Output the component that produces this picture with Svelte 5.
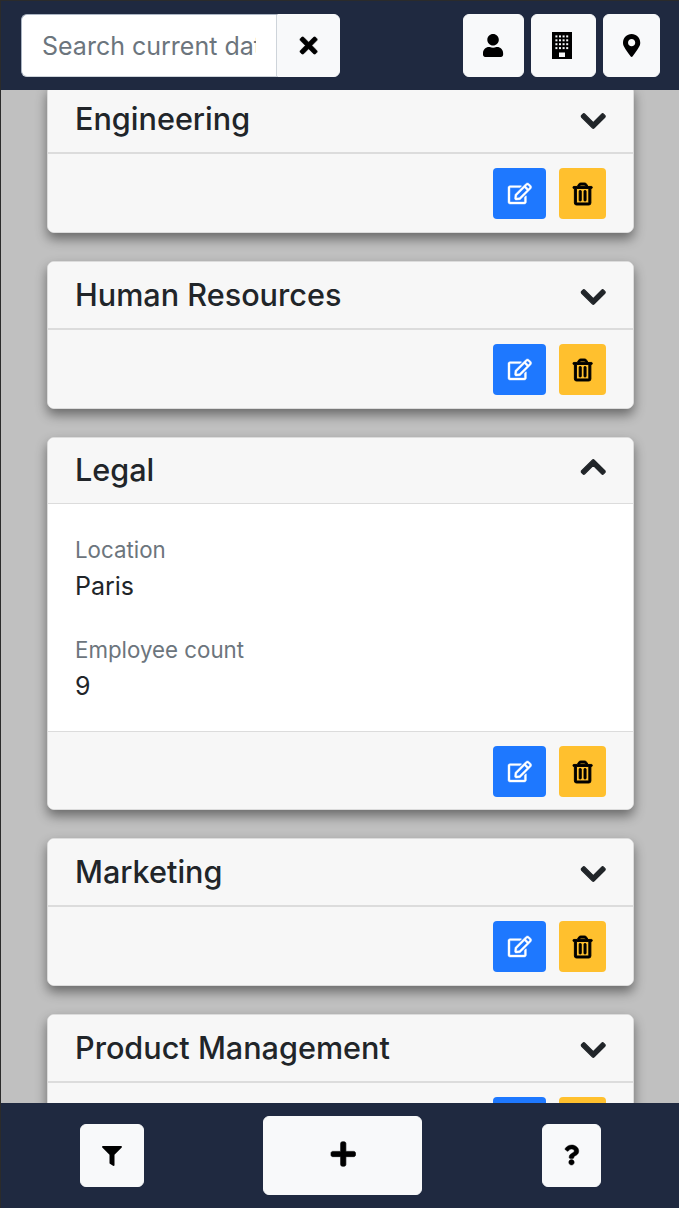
<script>
  const icons = {
    times: ['0 0 352 512', 'M242.72 256l100.07-100.07c12.28-12.28 12.28-32.19 0-44.48l-22.24-22.24c-12.28-12.28-32.19-12.28-44.48 0L176 189.28 75.93 89.21c-12.28-12.28-32.19-12.28-44.48 0L9.21 111.45c-12.28 12.28-12.28 32.19 0 44.48L109.28 256 9.21 356.07c-12.28 12.28-12.28 32.19 0 44.48l22.24 22.24c12.28 12.28 32.2 12.28 44.48 0L176 322.72l100.07 100.07c12.28 12.28 32.2 12.28 44.48 0l22.24-22.24c12.28-12.28 12.28-32.19 0-44.48L242.72 256z'],
    user: ['0 0 448 512', 'M224 256c70.7 0 128-57.3 128-128S294.7 0 224 0 96 57.3 96 128s57.3 128 128 128zm89.6 32h-16.7c-22.2 10.2-46.9 16-72.9 16s-50.6-5.8-72.9-16h-16.7C60.2 288 0 348.2 0 422.4V464c0 26.5 21.5 48 48 48h352c26.5 0 48-21.5 48-48v-41.6c0-74.2-60.2-134.4-134.4-134.4z'],
    marker: ['0 0 384 512', 'M172.268 501.67C26.97 291.031 0 262.429 0 192 0 85.961 85.961 0 192 0s192 85.961 192 192c0 70.429-26.97 99.031-172.268 309.67-9.535 13.774-29.93 13.773-39.464 0zM192 272c44.183 0 80-35.817 80-80s-35.817-80-80-80-80 35.817-80 80 35.817 80 80 80z'],
    down: ['0 0 448 512', 'M207.029 381.476L12.686 187.132c-9.373-9.373-9.373-24.569 0-33.941l22.667-22.667c9.357-9.357 24.522-9.375 33.901-.04L224 284.505l154.745-154.021c9.379-9.335 24.544-9.317 33.901.04l22.667 22.667c9.373 9.373 9.373 24.569 0 33.941L240.971 381.476c-9.373 9.372-24.569 9.372-33.942 0z'],
    up: ['0 0 448 512', 'M240.971 130.524l194.343 194.343c9.373 9.373 9.373 24.569 0 33.941l-22.667 22.667c-9.357 9.357-24.522 9.375-33.901.04L224 227.495 69.255 381.516c-9.379 9.335-24.544 9.317-33.901-.04l-22.667-22.667c-9.373-9.373-9.373-24.569 0-33.941L207.03 130.525c9.372-9.373 24.568-9.373 33.941-.001z'],
    edit: ['0 0 576 512', 'M402.3 344.9l32-32c5-5 13.7-1.5 13.7 5.7V464c0 26.5-21.5 48-48 48H48c-26.5 0-48-21.5-48-48V112c0-26.5 21.5-48 48-48h273.5c7.1 0 10.7 8.6 5.7 13.7l-32 32c-1.5 1.5-3.5 2.3-5.7 2.3H48v352h352V350.5c0-2.1.8-4.1 2.3-5.6zm156.6-201.8L296.3 405.7l-90.4 10c-26.2 2.9-48.5-19.2-45.6-45.6l10-90.4L432.9 17.1c22.9-22.9 59.9-22.9 82.7 0l43.2 43.2c22.9 22.9 22.9 60 .1 82.8zM460.1 174L402 115.9 216.2 301.8l-7.3 65.3 65.3-7.3L460.1 174zm64.8-79.7l-43.2-43.2c-4.1-4.1-10.8-4.1-14.8 0L436 82l58.1 58.1 30.9-30.9c4-4.2 4-10.8-.1-14.9z'],
    trash: ['0 0 448 512', 'M268 416h24a12 12 0 0 0 12-12V188a12 12 0 0 0-12-12h-24a12 12 0 0 0-12 12v216a12 12 0 0 0 12 12zM432 80h-82.41l-34-56.7A48 48 0 0 0 274.41 0H173.59a48 48 0 0 0-41.16 23.3L98.41 80H16A16 16 0 0 0 0 96v16a16 16 0 0 0 16 16h16v336a48 48 0 0 0 48 48h288a48 48 0 0 0 48-48V128h16a16 16 0 0 0 16-16V96a16 16 0 0 0-16-16zM171.84 50.91A6 6 0 0 1 177 48h94a6 6 0 0 1 5.15 2.91L293.61 80H154.39zM368 464H80V128h288zm-212-48h24a12 12 0 0 0 12-12V188a12 12 0 0 0-12-12h-24a12 12 0 0 0-12 12v216a12 12 0 0 0 12 12z'],
    filter: ['0 0 512 512', 'M487.976 0H24.028C2.71 0-8.047 25.866 7.058 40.971L192 225.941V432c0 7.831 3.821 15.172 10.237 19.662l80 55.98C298.02 518.69 320 507.493 320 487.98V225.941l184.947-184.97C520.021 25.896 509.338 0 487.976 0z'],
    plus: ['0 0 448 512', 'M416 208H272V64c0-17.67-14.33-32-32-32h-32c-17.67 0-32 14.33-32 32v144H32c-17.67 0-32 14.33-32 32v32c0 17.67 14.33 32 32 32h144v144c0 17.67 14.33 32 32 32h32c17.67 0 32-14.33 32-32V304h144c17.67 0 32-14.33 32-32v-32c0-17.67-14.33-32-32-32z'],
    question: ['0 0 384 512', 'M202.021 0C122.202 0 70.503 32.703 29.914 91.026c-7.363 10.58-5.093 25.086 5.178 32.874l43.138 32.709c10.373 7.865 25.132 6.026 33.253-4.148 25.049-31.381 43.63-49.449 82.757-49.449 30.764 0 68.816 19.799 68.816 49.631 0 22.552-18.617 34.134-48.993 51.164-35.423 19.86-82.299 44.576-82.299 106.405V320c0 13.255 10.745 24 24 24h72.471c13.255 0 24-10.745 24-24v-5.773c0-42.86 125.268-44.645 125.268-160.627C377.504 66.256 286.902 0 202.021 0zM192 373.459c-38.196 0-69.271 31.075-69.271 69.271 0 38.195 31.075 69.27 69.271 69.27s69.271-31.075 69.271-69.271-31.075-69.27-69.271-69.27z']
  };

  const departments = [
    { name: 'Engineering' },
    { name: 'Human Resources' },
    { name: 'Legal', open: true, location: 'Paris', count: 9 },
    { name: 'Marketing' },
    { name: 'Product Management' }
  ];
</script>

{#snippet icon(name, h, bold = 0)}
  <svg viewBox={icons[name][0]} height={h} fill="currentColor" stroke="currentColor" stroke-width={bold} aria-hidden="true"><path d={icons[name][1]} /></svg>
{/snippet}

<div class="app">
  <header class="top">
    <div class="search">
      <input type="text" placeholder="Search current data" />
      <button class="btn clear" type="button">{@render icon('times', 25, 14)}</button>
    </div>
    <div class="tabs">
      <button class="btn tab-user" type="button">{@render icon('user', 23)}</button>
      <button class="btn tab-dept" type="button">
        <svg viewBox="0 0 20 27" width="20" height="27" aria-hidden="true">
          <rect width="20" height="27" fill="#000" />
          {#each [0, 1, 2, 3] as row}
            {#each [0, 1, 2, 3] as col}
              <rect x={3.4 + col * 3.6} y={3.4 + row * 3.9} width="2" height="2" fill="#f8f9fa" />
            {/each}
          {/each}
          <rect x="7" y="20.5" width="6" height="4.5" fill="#f8f9fa" />
        </svg>
      </button>
      <button class="btn tab-loc" type="button">{@render icon('marker', 23)}</button>
    </div>
  </header>

  <main class="scroller">
    <div class="list">
      {#each departments as dept}
        <section class="card">
          <div class="card-head" class:open={dept.open}>
            <h2>{dept.name}</h2>
            <span class="chev">{@render icon(dept.open ? 'up' : 'down', 28, 22)}</span>
          </div>
          {#if dept.open}
            <div class="card-body">
              <div class="field">
                <div class="label">Location</div>
                <div class="value">{dept.location}</div>
              </div>
              <div class="field">
                <div class="label">Employee count</div>
                <div class="value">{dept.count}</div>
              </div>
            </div>
          {/if}
          <div class="card-foot">
            <button class="act edit" type="button">{@render icon('edit', 21, 10)}</button>
            <button class="act del" type="button">{@render icon('trash', 22, 22)}</button>
          </div>
        </section>
      {/each}
    </div>
  </main>

  <footer class="bottom">
    <button class="btn foot-filter" type="button">{@render icon('filter', 20)}</button>
    <button class="btn foot-add" type="button">{@render icon('plus', 28, 12)}</button>
    <button class="btn foot-help" type="button">{@render icon('question', 20, 12)}</button>
  </footer>
</div>

<style>
  :global(body) {
    background: #c0c0c0;
  }
  .app {
    height: 1208px;
    display: flex;
    flex-direction: column;
    overflow: hidden;
    font-family: Inter, "Liberation Sans", sans-serif;
    color: #212529;
    background: #c0c0c0;
    border-left: 1px solid #2b2b2b;
    box-sizing: border-box;
  }
  .btn {
    display: flex;
    align-items: center;
    justify-content: center;
    padding: 0;
    border: 1px solid #f8f9fa;
    border-radius: 6px;
    background: #f8f9fa;
    color: #000;
  }
  svg {
    overflow: visible;
  }
  .top {
    height: 90px;
    flex: none;
    display: flex;
    justify-content: space-between;
    align-items: flex-start;
    box-sizing: border-box;
    padding: 13px 19px 0 20px;
    background: #1f2940;
    border-top: 1px solid #2b2b2b;
    position: relative;
    z-index: 2;
  }
  .search {
    display: flex;
    height: 63px;
  }
  input {
    width: 256px;
    box-sizing: border-box;
    padding: 0 20px;
    font: 400 25px Inter, "Liberation Sans", sans-serif;
    border: 1px solid #ced4da;
    border-top-color: #aab4c2;
    border-left-color: #aab4c2;
    border-radius: 6px 0 0 6px;
    background: #fff;
    outline: none;
  }
  input::placeholder {
    color: #6c757d;
  }
  .clear {
    width: 63px;
    border-radius: 0 6px 6px 0;
  }
  .tabs {
    display: flex;
    gap: 7px;
  }
  .tabs .btn {
    height: 63px;
  }
  .tab-user { width: 61px; }
  .tab-dept { width: 65px; padding-right: 3px; }
  .tab-loc { width: 57px; }
  .scroller {
    flex: 1;
    min-height: 0;
    overflow: hidden;
  }
  .list {
    display: flex;
    flex-direction: column;
    gap: 28px;
    margin: -5px 45px 0 46px;
  }
  .card {
    flex: none;
    border: 1px solid #dcdcdc;
    border-radius: 7px;
    background: #fff;
    box-shadow: 0 6px 12px rgba(0, 0, 0, 0.45);
    overflow: hidden;
  }
  .card-head {
    height: 66px;
    display: flex;
    align-items: center;
    justify-content: space-between;
    padding: 0 28px 0 27px;
    background: #f7f7f7;
    border-bottom: 1px solid #dcdcdc;
  }
  .card-head.open {
    height: 65px;
  }
  h2 {
    margin: 0;
    font-size: 30.6px;
    font-weight: 500;
    line-height: 1.2;
  }
  .chev {
    display: flex;
    margin-top: 4px;
    color: #212529;
  }
  .open .chev {
    margin-top: 0;
    margin-bottom: 8px;
  }
  .card-body {
    padding: 29px 27px 25px;
  }
  .field + .field {
    margin-top: 27px;
  }
  .label {
    font-size: 22.3px;
    line-height: 33px;
    color: #6c757d;
  }
  .value {
    font-size: 25px;
    line-height: 40px;
  }
  .card-foot {
    height: 79px;
    box-sizing: border-box;
    display: flex;
    justify-content: flex-end;
    align-items: flex-start;
    gap: 13px;
    padding: 14px 27px 0;
    background: #f7f7f7;
    border-top: 1px solid #dcdcdc;
  }
  .card-body + .card-foot {
    height: 78px;
  }
  .act {
    height: 51px;
    display: flex;
    align-items: center;
    justify-content: center;
    padding: 0;
    border: none;
    border-radius: 4px;
    color: #000;
  }
  .edit {
    width: 53px;
    background: #1e78ff;
    color: #fff;
  }
  .del {
    width: 47px;
    background: #ffc02e;
  }
  .bottom {
    height: 105px;
    flex: none;
    position: relative;
    z-index: 2;
    display: flex;
    align-items: flex-start;
    justify-content: space-between;
    box-sizing: border-box;
    padding: 13px 78px 0 79px;
    background: #1f2940;
  }
  .foot-filter {
    width: 64px;
    height: 63px;
    margin-top: 8px;
  }
  .foot-add {
    width: 159px;
    height: 79px;
    margin-right: 2px;
    padding: 0 0 3px 2px;
  }
  .foot-help {
    width: 59px;
    height: 63px;
    margin-top: 8px;
    padding-bottom: 2px;
  }
</style>
